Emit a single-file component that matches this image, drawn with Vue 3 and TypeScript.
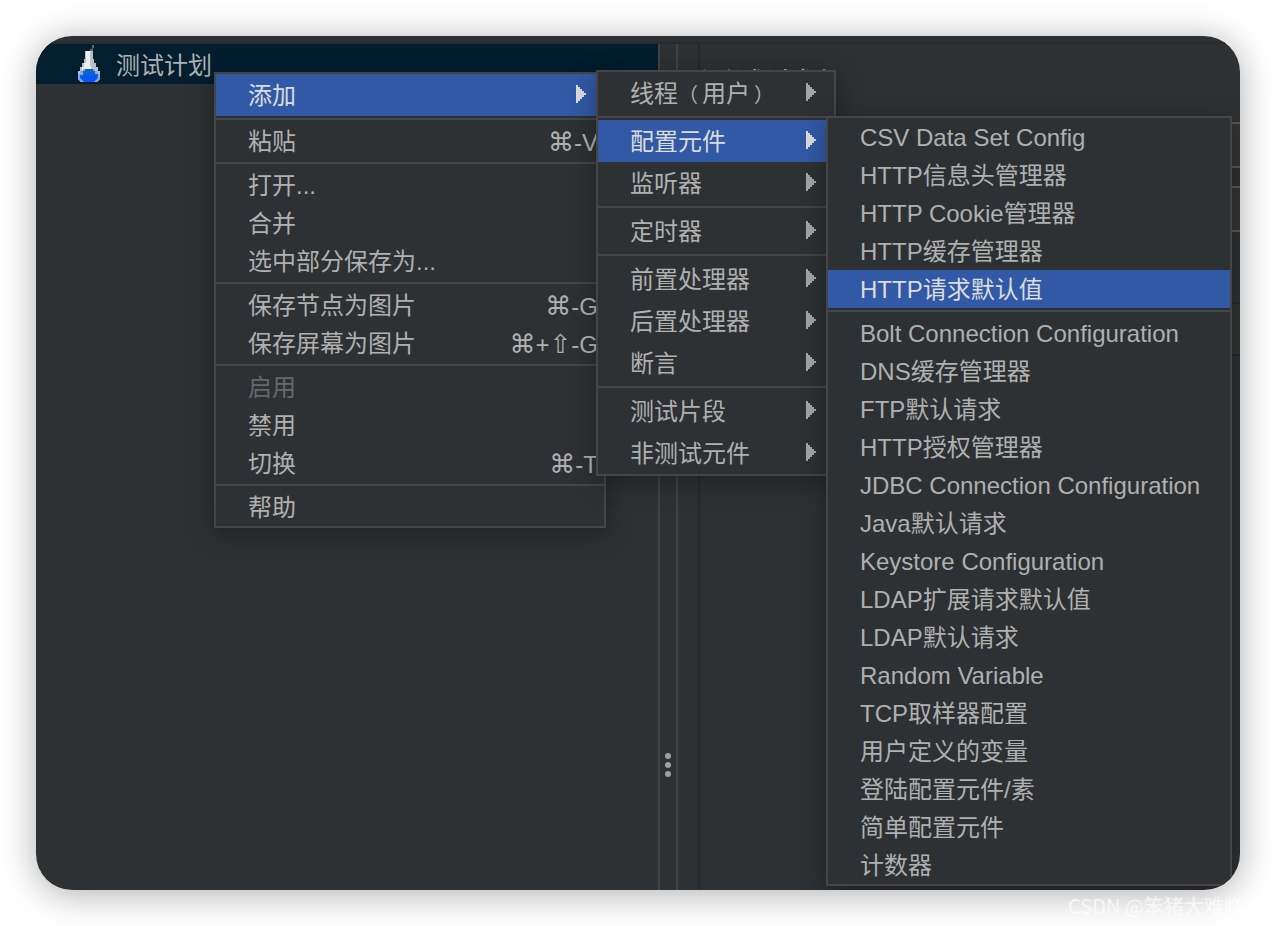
<script setup lang="ts">
interface Item {
  label: string
  keys?: string
  sub?: boolean
  active?: boolean
  disabled?: boolean
}
type Group = Item[]

const rootMenu: Group[] = [
  [{ label: '添加', sub: true, active: true }],
  [{ label: '粘贴', keys: '⌘-V' }],
  [{ label: '打开...' }, { label: '合并' }, { label: '选中部分保存为...' }],
  [{ label: '保存节点为图片', keys: '⌘-G' }, { label: '保存屏幕为图片', keys: '⌘+⇧-G' }],
  [{ label: '启用', disabled: true }, { label: '禁用' }, { label: '切换', keys: '⌘-T' }],
  [{ label: '帮助' }],
]

const addMenu: Group[] = [
  [{ label: '线程（用户）', sub: true }],
  [{ label: '配置元件', sub: true, active: true }, { label: '监听器', sub: true }],
  [{ label: '定时器', sub: true }],
  [{ label: '前置处理器', sub: true }, { label: '后置处理器', sub: true }, { label: '断言', sub: true }],
  [{ label: '测试片段', sub: true }, { label: '非测试元件', sub: true }],
]

const configMenu: Group[] = [
  [
    { label: 'CSV Data Set Config' },
    { label: 'HTTP信息头管理器' },
    { label: 'HTTP Cookie管理器' },
    { label: 'HTTP缓存管理器' },
    { label: 'HTTP请求默认值', active: true },
  ],
  [
    'Bolt Connection Configuration',
    'DNS缓存管理器',
    'FTP默认请求',
    'HTTP授权管理器',
    'JDBC Connection Configuration',
    'Java默认请求',
    'Keystore Configuration',
    'LDAP扩展请求默认值',
    'LDAP默认请求',
    'Random Variable',
    'TCP取样器配置',
    '用户定义的变量',
    '登陆配置元件/素',
    '简单配置元件',
    '计数器',
  ].map((label) => ({ label })),
]

const menus = [
  { name: 'root', groups: rootMenu },
  { name: 'add', groups: addMenu },
  { name: 'config', groups: configMenu },
]

// Splits off full-width brackets and key symbols, which have their own styles.
const parts = (text: string): string[] => text.split(/([（）⌘⇧])/).filter(Boolean)
const partClass = (part: string) => ({
  bracket: part === '（' || part === '）',
  closing: part === '）',
  symbol: part === '⌘' || part === '⇧',
})
</script>

<template>
  <div class="page">
    <main class="window">
      <div class="toolbar"></div>
      <div class="body">
        <aside class="tree">
          <div class="node">
            <svg class="flask" width="24" height="38" viewBox="0 0 24 38" aria-hidden="true">
              <path d="M13 6V4h2V0h2v3h-1v3z" fill="#5d6b74" />
              <path d="M8 6h8v8h1v4h2v4h2v4h2v8l-3 3H4l-3-3v-8h2v-4h2v-4h2v-4h1z" fill="#b9bfc6" />
              <path d="M9 6h4v13l2 6H5v-3h2v-4h2z" fill="#eceeef" />
              <path d="M3 26h3v-2h12v2h3v3h2v5l-3 3H4l-3-3v-5h2z" fill="#86a9e6" />
              <path d="M6 26h2v-2h8v2h2v3h3v4l-3 3H6l-3-3v-3h3z" fill="#0b63d2" />
              <path d="M5 31h14v3l-2 3H7l-2-3z" fill="#0556fa" />
            </svg>
            <span>测试计划</span>
          </div>
        </aside>
        <div class="divider"><i></i><i></i><i></i></div>
        <section class="editor">
          <h1>测试计划</h1>
          <div class="field"></div>
          <div class="field"></div>
          <div class="band"></div>
        </section>
      </div>

      <nav v-for="menu in menus" :key="menu.name" class="menu" :class="menu.name">
        <ul v-for="(group, g) in menu.groups" :key="g">
          <li v-for="item in group" :key="item.label">
            <button type="button" :class="{ active: item.active }" :disabled="item.disabled">
              <span><span v-for="(p, i) in parts(item.label)" :key="i" :class="partClass(p)">{{ p }}</span></span>
              <kbd v-if="item.keys"><span v-for="(p, i) in parts(item.keys)" :key="i" :class="partClass(p)">{{ p }}</span></kbd>
              <svg v-if="item.sub" class="arrow" width="10" height="18" viewBox="0 0 10 18" aria-hidden="true">
                <path d="M0 0h2v2h2v2h2v2h2v2h2v2H8v2H6v2H4v2H2v2H0z" fill="currentColor" />
              </svg>
            </button>
          </li>
        </ul>
      </nav>
    </main>
    <div class="watermark">CSDN @笨猪大难临头</div>
  </div>
</template>

<style>
body {
  margin: 0;
  background: #fff;
}
</style>

<style scoped>
.page {
  position: relative;
  box-sizing: border-box;
  min-height: 100vh;
  padding: 36px;
  display: flex;
  overflow: hidden;
  font-family: "Liberation Sans", "Noto Sans CJK SC", sans-serif;
  font-size: 24px;
  color: #afb0b0;
}
.window {
  position: relative;
  flex: 1;
  display: flex;
  flex-direction: column;
  overflow: hidden;
  border-radius: 36px;
  background: #2d3133;
  min-height: 852px;
}
.page::before {
  content: "";
  position: absolute;
  inset: 36px;
  border-radius: 36px;
  box-shadow: 0 4px 36px rgba(0, 0, 0, 0.32);
}
.toolbar {
  height: 6px;
  border-bottom: 2px solid #282b2d;
}
.body {
  flex: 1;
  display: flex;
}
.tree {
  flex: 0 0 622px;
}
.node {
  display: flex;
  align-items: center;
  gap: 15px;
  height: 40px;
  padding-left: 41px;
  line-height: 44px;
  background: #021e2f;
}
.node span {
  height: 40px;
}
.divider {
  flex: 0 0 16px;
  display: flex;
  flex-direction: column;
  align-items: center;
  justify-content: flex-end;
  gap: 3px;
  padding-bottom: 113px;
  box-sizing: content-box;
  border: solid #454342;
  border-width: 0 2px;
}
.divider i {
  width: 6px;
  height: 6px;
  border-radius: 3px;
  background: #9da0a1;
}
.editor {
  flex: 1;
  margin-left: 20px;
  border-left: 2px solid #26292b;
}
h1 {
  margin: 21px 0 17px;
  font-size: 32px;
  font-weight: 400;
  line-height: 40px;
}
.field {
  box-sizing: border-box;
  height: 46px;
  margin: 0 0 18px 80px;
  border: solid #555655;
  border-width: 2px 0;
  background: #323533;
}
.band {
  height: 50px;
  margin-top: 70px;
  border: solid #242628;
  border-width: 2px 0;
  background: #303335;
}
.menu {
  position: absolute;
  box-sizing: border-box;
  border: 2px solid #454545;
  background: #2d3133;
  box-shadow: 0 6px 24px rgba(0, 0, 0, 0.32);
}
.root {
  left: 178px;
  top: 36px;
  width: 392px;
}
.add {
  left: 560px;
  top: 34px;
  width: 240px;
}
.config {
  left: 790px;
  top: 80px;
  width: 406px;
}
ul {
  margin: 0;
  padding: 0;
  list-style: none;
}
ul + ul::before {
  content: "";
  display: block;
  height: 2px;
  border: solid #2d3133;
  border-width: 2px 0;
  background: #454545;
}
button {
  display: flex;
  align-items: center;
  justify-content: space-between;
  width: 100%;
  height: 38px;
  padding: 2px 6px 0 32px;
  border: 0;
  background: none;
  font: inherit;
  line-height: 36px;
  text-align: left;
  white-space: nowrap;
  color: inherit;
}
.add button,
.root button.active {
  height: 42px;
}
button:disabled {
  color: #666869;
}
button.active {
  background: #3159a6;
  color: #dcdcdc;
}
kbd {
  font-family: "Liberation Sans", sans-serif;
}
.bracket {
  display: inline-block;
  width: 24px;
  font-size: 20px;
}
.closing {
  text-align: right;
}
.symbol {
  font-family: "DejaVu Sans", sans-serif;
  font-size: 26px;
}
.arrow {
  margin: 0 12px 4px 0;
  color: #a2a5a7;
}
.active .arrow {
  color: #dcdcdc;
}
.watermark {
  position: absolute;
  left: 1068px;
  bottom: 5px;
  font-family: "Noto Sans CJK SC", sans-serif;
  font-size: 20px;
  line-height: 30px;
  white-space: nowrap;
  color: rgba(255, 255, 255, 0.7);
}
</style>
